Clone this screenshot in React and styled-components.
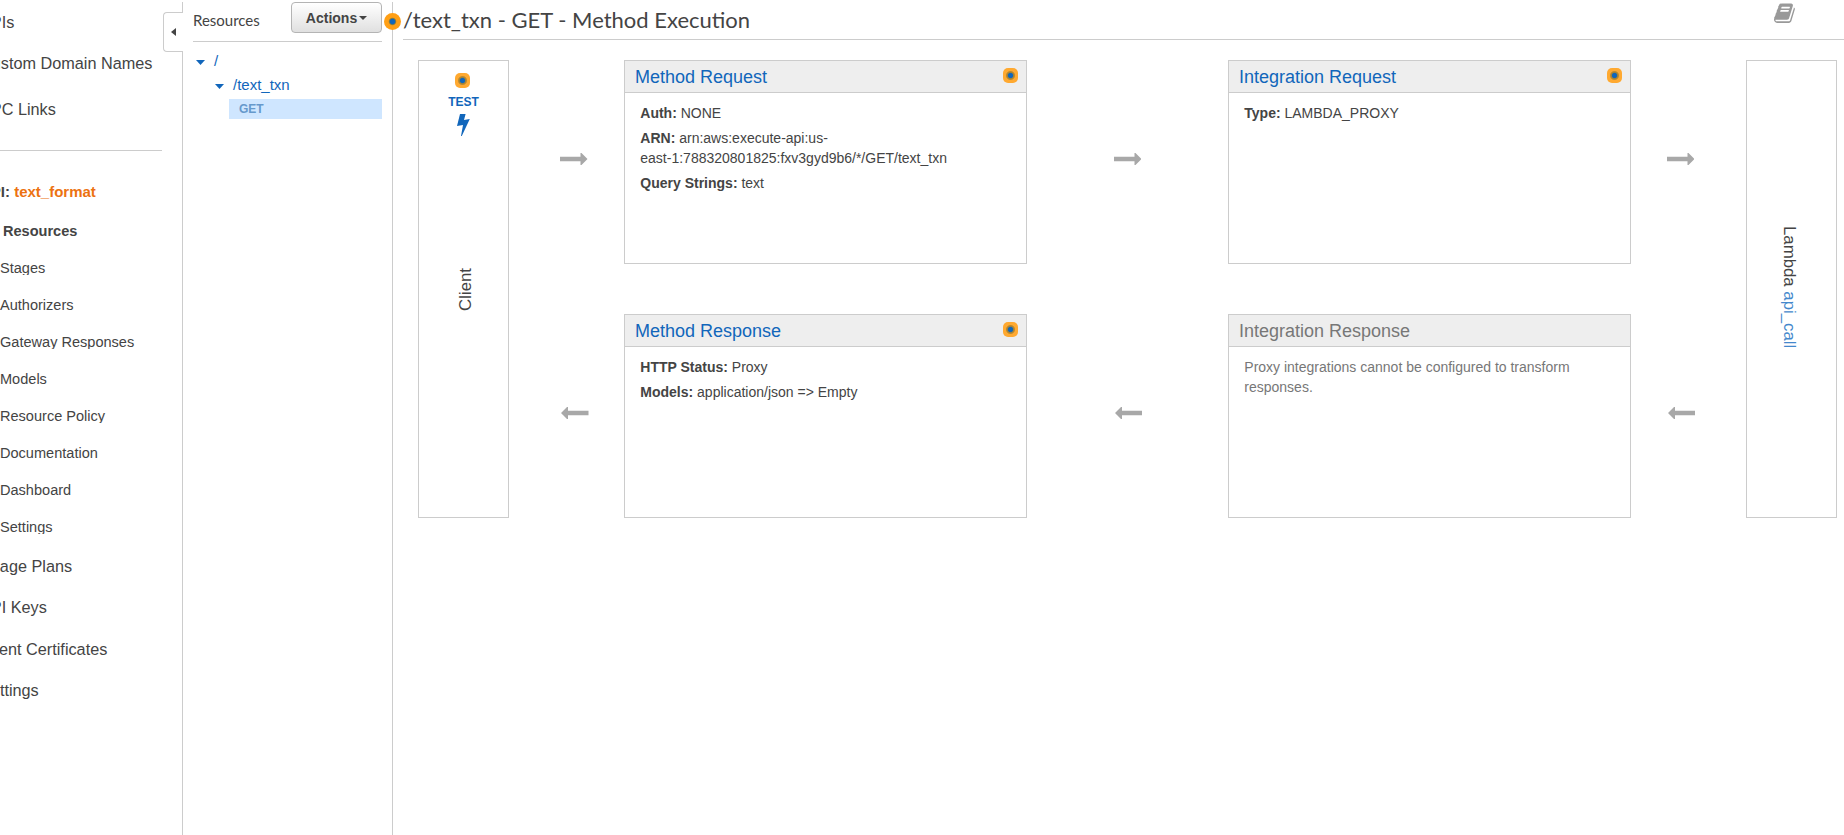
import React from "react";
import styled, { createGlobalStyle } from "styled-components";

const Global = createGlobalStyle`
  *, *::before, *::after { box-sizing: border-box; }
  html, body { margin: 0; height: 100%; overflow: hidden; background: #fff; }
  body { font-family: "Liberation Sans", Arial, sans-serif; font-size: 14px; color: #444; }
`;

const Page = styled.div`
  display: flex;
  height: 835px;
  padding-top: 2px;
  overflow: hidden;
`;

const Sidebar = styled.nav`
  position: relative;
  flex: 0 0 183px;
  border-right: 1px solid #ccc;
`;

const NavList = styled.div`
  margin-left: -20px;
  display: flex;
  flex-direction: column;
`;

const NavItem = styled.a`
  font-size: 16.25px;
  line-height: 20px;
  margin-top: ${(p) => p.$gap}px;
  white-space: nowrap;
`;

const Divider = styled.hr`
  width: 182px;
  margin: 31px 0 0;
  border: 0;
  border-top: 1px solid #ccc;
`;

const ApiName = styled.div`
  margin-top: 31px;
  font-size: 15px;
  line-height: 20px;
  font-weight: bold;
  white-space: nowrap;
  span { color: #ec7211; }
`;

const SubItem = styled.a`
  height: 15px;
  line-height: 16px;
  margin: ${(p) => (p.$active ? "21px 0 0 23px" : "22px 0 0 20px")};
  font-size: 14.55px;
  font-weight: ${(p) => (p.$active ? "bold" : "normal")};
  white-space: nowrap;
  overflow: hidden;
`;

const CollapseTab = styled.button`
  position: absolute;
  top: 10px;
  right: -1px;
  width: 20px;
  height: 40px;
  padding: 0 0 0 7px;
  display: flex;
  align-items: center;
  background: #fff;
  border: 1px solid #ccc;
  border-right: 0;
  border-radius: 4px 0 0 4px;
`;

const ResourcePanel = styled.section`
  flex: 0 0 210px;
  padding: 0 10px;
  border-right: 1px solid #ccc;
`;

const PanelHead = styled.header`
  display: flex;
  justify-content: space-between;
  height: 40px;
  border-bottom: 1px solid #ccc;
`;

const PanelTitle = styled.h2`
  margin: 8px 0 0;
  font: 400 15px/20px Lato, sans-serif;
`;

const ActionsButton = styled.button`
  display: flex;
  align-items: center;
  justify-content: center;
  gap: 2px;
  width: 91px;
  height: 31px;
  padding: 0;
  border: 1px solid #b4b4b4;
  border-radius: 4px;
  background: linear-gradient(#fff, #e0e0e0);
  color: #444;
  font: bold 14px/20px "Liberation Sans", Arial, sans-serif;
`;

const Tree = styled.div`
  padding-top: 8px;
`;

const TreeRow = styled.div`
  display: flex;
  align-items: center;
  gap: 9px;
  height: 24px;
  padding-left: ${(p) => p.$indent}px;
  font-size: 15px;
  color: #1166bb;
`;

const TreeLabel = styled.span`
  line-height: 18px;
  padding-bottom: 2px;
`;

const MethodRow = styled.div`
  height: 20px;
  margin: 1px 0 0 36px;
  padding-left: 10px;
  background: #cfe6ff;
  color: #6699cc;
  font: bold 12px/20px "Liberation Sans", Arial, sans-serif;
`;

const Main = styled.main`
  position: relative;
  flex: 1;
  min-width: 0;
  padding-left: 10px;
`;

const TitleBar = styled.header`
  display: flex;
  justify-content: space-between;
  height: 38px;
  padding-right: 48px;
  border-bottom: 1px solid #ccc;
`;

const Title = styled.h1`
  margin: 3px 0 0;
  font: 400 22px/30px Lato, sans-serif;
`;

const HotDot = styled.span`
  position: absolute;
  left: -9px;
  top: 11px;
  width: 17px;
  height: 17px;
  border-radius: 50%;
  background: radial-gradient(circle, #1166bb 2.4px, #8b7d3c 3.2px, #ff9f15 4.2px);
`;

const Dot = styled.span`
  flex: none;
  width: 15px;
  height: 15px;
  border-radius: 5px;
  background: radial-gradient(circle, #1166bb 2.2px, #a08035 3px, #b98a33 4px, #ffa930 5px);
`;

const Flow = styled.div`
  display: grid;
  grid-template-columns: 91px 115px 403px 201px 403px 115px 91px;
  grid-template-rows: 204px 204px;
  row-gap: 50px;
  padding: 20px 0 0 15px;
`;

const EndPoint = styled.div`
  grid-row: 1 / 3;
  grid-column: ${(p) => p.$col};
  display: flex;
  flex-direction: column;
  align-items: center;
  border: 1px solid #ccc;
  font-size: 16.8px;
`;

const TestLink = styled.a`
  display: flex;
  flex-direction: column;
  align-items: center;
  height: 64px;
  margin: 12px 2px 0 0;
  color: #1166bb;
  font-weight: bold;
  font-size: 12px;
  line-height: 14px;
  & > b { margin: 7px 0 5px 2px; }
  & > svg { margin-left: 3px; }
`;

const Vertical = styled.div`
  writing-mode: vertical-rl;
  transform: ${(p) => (p.$up ? "rotate(180deg)" : "none")};
  margin-top: ${(p) => p.$top}px;
  margin-left: ${(p) => p.$shift}px;
  line-height: 20px;
  white-space: nowrap;
  span { color: #4488cc; }
`;

const ArrowCell = styled.div`
  grid-column: ${(p) => p.$col};
  grid-row: ${(p) => p.$row};
  display: flex;
  align-items: center;
  padding-left: ${(p) => p.$pad}px;
  padding-bottom: 6px;
`;

const Card = styled.article`
  grid-column: ${(p) => p.$col};
  grid-row: ${(p) => p.$row};
  border: 1px solid #ccc;
  color: ${(p) => (p.$muted ? "#777" : "#444")};
`;

const CardHead = styled.header`
  display: flex;
  justify-content: space-between;
  height: 32px;
  padding: 7px 8px 0 10px;
  background: #eee;
  border-bottom: 1px solid #ccc;
`;

const CardTitle = styled.h3`
  margin: -2px 0 0;
  font-weight: 400;
  font-size: 18px;
  line-height: 22px;
  color: ${(p) => (p.$muted ? "#777" : "#1166bb")};
`;

const CardBody = styled.div`
  padding: 10px 60px 0 15.3px;
  line-height: 20px;
`;

const Line = styled.p`
  margin: 0 0 5px;
`;

const Caret = ({ w = 9, h = 5, d = "M0 0H9L4.5 5Z", color = "#1166bb" }) => (
  <svg width={w} height={h} viewBox={`0 0 ${w} ${h}`}><path d={d} fill={color} /></svg>
);

const Arrow = ({ col, row, pad, left }) => (
  <ArrowCell $col={col} $row={row} $pad={pad}>
    <svg width="27.5" height="12" viewBox="0 0 27.5 12">
      <path
        d={left ? "M27.5 3.8V8.2H7V12H6L0 6 6 0H7V3.8Z" : "M0 3.8V8.2H20.5V12H21.5L27.5 6 21.5 0H20.5V3.8Z"}
        fill="#a8a8a8"
      />
    </svg>
  </ArrowCell>
);

const Book = () => (
  <svg width="22.5" height="22.5" viewBox="0 0 1792 1792">
    <path fill="#999" d="M1639 478q40 57 18 129l-275 906q-19 64-76.5 107.5t-122.5 43.5h-923q-77 0-148.5-53.5t-99.5-131.5q-24-67-2-127 0-4 3-27t4-37q1-8-3-21.5t-3-19.5q2-11 8-21t16.5-23.5 16.5-23.5q23-38 45-91.5t30-91.5q3-10 .5-30t-.5-28q3-11 17-28t17-23q21-36 42-92t25-90q1-9-2.5-32t.5-28q4-13 22-30.5t22-22.5q19-26 42.5-84.5t27.5-96.5q1-8-3-25.5t-2-26.5q2-8 9-18t18-23 17-21q8-12 16.5-30.5t15-35 16-36 19.5-32 26.5-23.5 36-11.5 47.5 5.5l-1 3q38-9 51-9h761q74 0 114 56t18 130l-274 906q-36 119-71.5 153.5t-128.5 34.5h-869q-27 0-38 15-11 16-1 43 24 70 144 70h923q29 0 56-15.5t35-41.5l300-987q7-22 5-57 38 15 59 43zm-1064 2q-4 13 2 22.5t20 9.5h608q13 0 25.5-9.5t16.5-22.5l21-64q4-13-2-22.5t-20-9.5h-608q-13 0-25.5 9.5t-16.5 22.5zm-83 256q-4 13 2 22.5t20 9.5h608q13 0 25.5-9.5t16.5-22.5l21-64q4-13-2-22.5t-20-9.5h-608q-13 0-25.5 9.5t-16.5 22.5z" />
  </svg>
);

const SUB = ["Stages", "Authorizers", "Gateway Responses", "Models", "Resource Policy", "Documentation", "Dashboard", "Settings"];

const FlowCard = ({ col, row, title, muted, children }) => (
  <Card $col={col} $row={row} $muted={muted}>
    <CardHead>
      <CardTitle $muted={muted}>{title}</CardTitle>
      {!muted && <Dot />}
    </CardHead>
    <CardBody>{children}</CardBody>
  </Card>
);

export default function App() {
  return (
    <>
      <Global />
      <Page>
        <Sidebar>
          <NavList>
            <NavItem $gap={10}>APIs</NavItem>
            <NavItem $gap={21}>Custom Domain Names</NavItem>
            <NavItem $gap={26}>VPC Links</NavItem>
            <Divider />
            <ApiName>API: <span>text_format</span></ApiName>
            <SubItem $active>Resources</SubItem>
            {SUB.map((s) => <SubItem key={s}>{s}</SubItem>)}
            <NavItem $gap={22}>Usage Plans</NavItem>
            <NavItem $gap={21}>API Keys</NavItem>
            <NavItem $gap={22}>Client Certificates</NavItem>
            <NavItem $gap={21}>Settings</NavItem>
          </NavList>
          <CollapseTab aria-label="Collapse">
            <Caret w={5} h={8} d="M5 0V8L0 4Z" color="#444" />
          </CollapseTab>
        </Sidebar>

        <ResourcePanel>
          <PanelHead>
            <PanelTitle>Resources</PanelTitle>
            <ActionsButton>Actions<Caret w={8} h={4} d="M0 0H8L4 4Z" color="#444" /></ActionsButton>
          </PanelHead>
          <Tree>
            <TreeRow $indent={3}><Caret /><TreeLabel>/</TreeLabel></TreeRow>
            <TreeRow $indent={22}><Caret /><TreeLabel>/text_txn</TreeLabel></TreeRow>
            <MethodRow>GET</MethodRow>
          </Tree>
        </ResourcePanel>

        <Main>
          <HotDot />
          <TitleBar>
            <Title>/text_txn - GET - Method Execution</Title>
            <Book />
          </TitleBar>
          <Flow>
            <EndPoint $col={1}>
              <TestLink>
                <Dot />
                <b>TEST</b>
                <svg width="13" height="22" viewBox="0 0 13 22">
                  <path d="M3 0H8.6L7 6 12.8 5 4.8 22H4L6 11 0 12Z" fill="#1166bb" />
                </svg>
              </TestLink>
              <Vertical $up $top={131} $shift={5}>Client</Vertical>
            </EndPoint>
            <Arrow col={2} row={1} pad={51} />
            <Arrow col={2} row={2} pad={52} left />
            <FlowCard col={3} row={1} title="Method Request">
              <Line><b>Auth:</b> NONE</Line>
              <Line><b>ARN:</b> arn:aws:execute-api:us-<br />east-1:788320801825:fxv3gyd9b6/*/GET/text_txn</Line>
              <Line><b>Query Strings:</b> text</Line>
            </FlowCard>
            <FlowCard col={3} row={2} title="Method Response">
              <Line><b>HTTP Status:</b> Proxy</Line>
              <Line><b>Models:</b> application/json =&gt; Empty</Line>
            </FlowCard>
            <Arrow col={4} row={1} pad={86.5} />
            <Arrow col={4} row={2} pad={87.5} left />
            <FlowCard col={5} row={1} title="Integration Request">
              <Line><b>Type:</b> LAMBDA_PROXY</Line>
            </FlowCard>
            <FlowCard col={5} row={2} title="Integration Response" muted>
              <Line>Proxy integrations cannot be configured to transform<br />responses.</Line>
            </FlowCard>
            <Arrow col={6} row={1} pad={35.5} />
            <Arrow col={6} row={2} pad={36.5} left />
            <EndPoint $col={7}>
              <Vertical $top={165} $shift={-5}>Lambda <span>api_call</span></Vertical>
            </EndPoint>
          </Flow>
        </Main>
      </Page>
    </>
  );
}
